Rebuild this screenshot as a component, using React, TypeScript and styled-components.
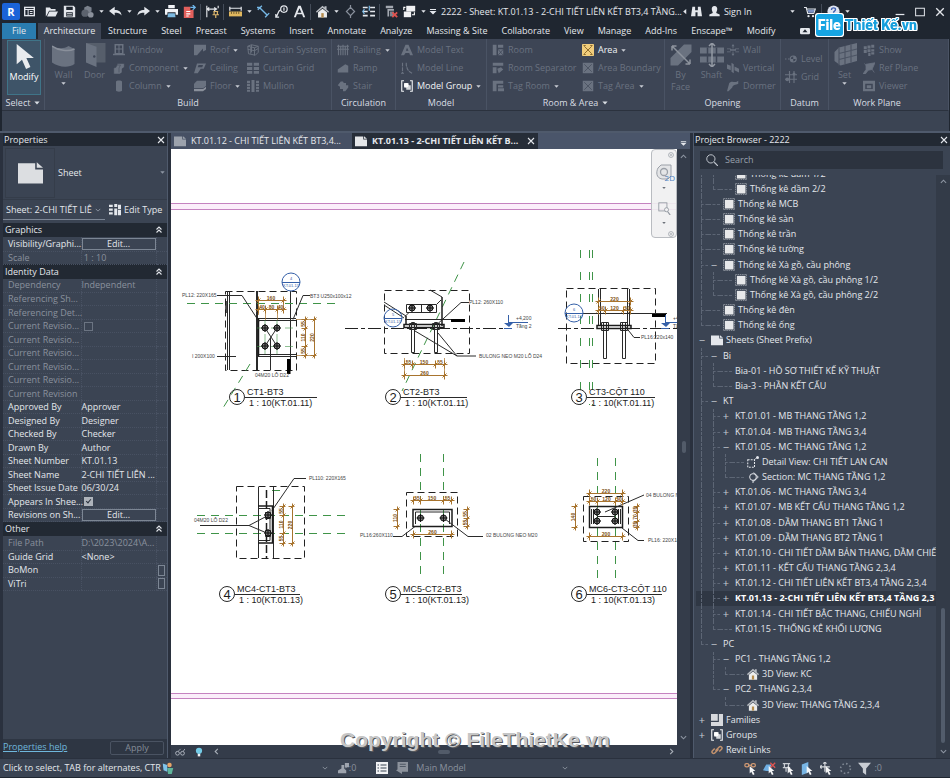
import React from 'react';
import styled, { createGlobalStyle, css } from 'styled-components';

const c = {
  dark: '#1f2630',
  header: '#222933',
  panel: '#3b4453',
  ribbon: '#3d4555',
  track: '#2e3643',
  frame: '#2a313e',
  tabStrip: '#4a556a',
  line: '#4f5a6c',
  text: '#e4e7ec',
  dim: '#6a7280',
  mute: '#8a919d',
};

const Global = createGlobalStyle`
  *, *::before, *::after { box-sizing: border-box; }
  body { margin: 0; background: ${c.dark}; }
  body, button, input, select, table { font-family: "Open Sans", "Noto Sans", sans-serif; font-size: 9px; line-height: 12px; color: ${c.text}; }
  button { background: none; border: 0; padding: 0; margin: 0; }
  svg { display: block; flex: none; }
`;

/* ---------- icons ---------- */

const P = 'currentColor';
const icons: Record<string, React.ReactNode> = {
  sheetWin: <><rect x="1" y="2" width="14" height="12" fill="none" stroke={P} strokeWidth="2" /><path d="M1 5h14M6 5v9M8.500 8h4M8.500 11h4" stroke={P} strokeWidth="1.500" /></>,
  open: <path d="M1 3h5l1.500 2H13v2H5L2.500 12 1 14zM5.500 8H16l-3 6H2.500z" fill={P} />,
  save: <path fillRule="evenodd" d="M1 1h12l2 2v12H1zM4 2v4h8V2zM4 9v5h8V9zM5 10h6v1H5zM5 12h6v1H5z" fill={P} />,
  sync: <><path d="M8 1l5 2v5l-5 2-4-2V3z" fill="#7a818c" /><circle cx="5" cy="10" r="4.500" fill="#5c636e" /><circle cx="12" cy="12" r="3.500" fill="#8b919b" /></>,
  undo: <path d="M7 2v4c5 0 8 2 8.500 7C13 10 11 9.500 7 9.500V13L0 7.500z" fill={P} />,
  redo: <path d="M9 2v4C4 6 1 8 .5 13 3 10 5 9.500 9 9.500V13l7-5.500z" fill={P} />,
  print: <><path d="M4 0h8v4H4zM0 5h16v7h-3V9H3v3H0z" fill="#f2f4f7" /><path d="M4 10h8l1 5H3z" fill="#7cb9e0" /></>,
  pdf: <><path d="M1 2h8v4h4v10H1z" fill="#e2605c" /><path d="M4 8h5M4 11h5M4 13.500h3" stroke="#fff" strokeWidth="1.400" /><path d="M9 3h6m-3-3l3 3-3 3" fill="none" stroke="#6fb6ea" strokeWidth="1.600" /></>,
  pin: <><path d="M1 1v14M15 1v3M1 5h12M4 3L1.500 5 4 7M10 3l3 2-3 2" stroke={P} strokeWidth="1.400" fill="none" /><path d="M9 8h6M10 8v4M14 8v4M8 12h8M12 12v4" stroke="#d9b36a" strokeWidth="1.500" /></>,
  ruler: <><path d="M1 2v5M15 2v5M1 4h14" stroke={P} strokeWidth="1.500" /><rect x="0" y="8" width="16" height="6" fill="#e0b75e" /><path d="M3 8v3M6 8v3M9 8v3M12 8v3" stroke="#5b4a25" /></>,
  dimension: <path d="M3 3l10 10M1 6l5-5M10 15l5-5M0 3h4" stroke="#76b8e6" strokeWidth="1.700" fill="none" />,
  tag: <><circle cx="11" cy="5" r="4" fill="none" stroke={P} strokeWidth="1.500" /><path d="M11 3v4M7 6c-4 1-3 7-6 9M1 11v4h4" stroke={P} strokeWidth="1.500" fill="none" /></>,
  textA: <path fillRule="evenodd" d="M6.500 1h3L15 15h-2.500l-1.300-3.500H4.800L3.500 15H1zM8 4L5.600 9.500h4.800z" fill={P} />,
  house: <><path d="M0 8l8-7 2.500 2.200V1.500H13v4L16 8l-1 1.500L8 3.500 1 9.500z" fill="#b7bbc1" /><path d="M2.500 9L8 4.500 13.500 9v6.500h-11z" fill="#eceded" /><path d="M6.500 10h3v5.500h-3z" fill="#b58c4d" /></>,
  section: <path d="M8 0v3M8 13v3M8 3l5 5-5 5-5-5z" fill="none" stroke="#8a919d" strokeWidth="1.500" />,
  thin: <><path d="M1 3h6M1 8h6M1 13h6M10 3h6M10 8h6M10 13h6" stroke={P} strokeWidth="2" /><path d="M3 5l-2 3 2 3M9 1v6" stroke="#76b8e6" strokeWidth="1.500" fill="none" /></>,
  closeWin: <><path d="M1 1h9v3H1zM3 5h8v2H5v7H3z" fill="#a3a8b0" /><path d="M6 8h5v6H6z" fill="#7d848f" /><path d="M9 9l6 6M15 9l-6 6" stroke="#e0524e" strokeWidth="2.200" /></>,
  switchWin: <><rect x="4" y="1" width="11" height="7" fill="#f1f2f4" /><rect x="1" y="8" width="9" height="7" fill="#f1f2f4" /><path d="M11 12h3V9M3 3H1v3" stroke="#fff" strokeWidth="1.400" fill="none" /></>,
  binoculars: <path d="M2 1h4v5h4V1h4l2 14H9.500V9h-3v6H0z" fill={P} />,
  user: <path d="M8 0c3 0 4 2 4 4.500S10.500 9 10.500 10l5 2.500V15H.5v-2.500l5-2.500C5.500 9 4 7 4 4.500S5 0 8 0z" fill={P} />,
  cart: <><path d="M0 2h3l2 8h8l2-6H4" fill="none" stroke={P} strokeWidth="1.600" /><path d="M5 5h9l-1.500 4H6z" fill="#7d92c4" /><circle cx="6" cy="13.500" r="1.500" fill={P} /><circle cx="12" cy="13.500" r="1.500" fill={P} /></>,
  help: <><circle cx="8" cy="8" r="7.500" fill="#dfe5f2" /><path d="M5.500 6c0-3.500 5-3 5-.5 0 2-2.500 2-2.500 4M8 11.500v1.500" fill="none" stroke="#3e5fb0" strokeWidth="1.700" /></>,
  cursor: <path d="M3 0v13l3.400-3L9 16l2.800-1.300L9.200 9H14z" fill="#e9ebee" />,
  wall: <><path d="M0 2c4 2 8 2 11 0l4 2v10c-4 3-11 2-15-1z" fill={P} /><path d="M0 2c4 3 11 4 15 2" fill="none" stroke="#8a909b" /></>,
  door: <><path d="M2 0h13v13H7z" fill="#565e6b" /><path d="M2 0l7 2.500V16l-7-3z" fill={P} /><circle cx="7.500" cy="9" r=".8" fill="#3d4555" /></>,
  window: <path fillRule="evenodd" d="M2 0h12v13h2v2H0v-2h2zM4 2v4h3.300V2zM8.700 2v4H12V2zM4 7.400V12h3.300V7.400zM8.700 7.400V12H12V7.400z" fill={P} />,
  component: <path d="M6 2h9v5l-3 2v5l-3 2H1V8l3-1zM5 4h5l-2 4v6" fill={P} stroke="#3d4555" strokeWidth=".7" />,
  column: <path d="M4 2c0-2 8-2 8 0v12c0 2-8 2-8 0z" fill={P} />,
  roof: <path d="M0 1h16v7l-4 2V6L4 15H0z" fill={P} />,
  ceiling: <path fillRule="evenodd" d="M4 2h12l-3 7H9l-4 6H0zM6 4L5 7h6l1-3z" fill={P} />,
  floor: <><path d="M4 1h12v7l-4 3H0V5z" fill={P} /><path d="M0 12h12l4-3v3l-4 3H0z" fill="#8a909b" /></>,
  curtainSys: <path d="M1 3l5-2 9 2v8l-4 4-9-2zM1 3l9 2 5-2M10 5v10M1 7l9 2 5-3M5 4v9M6 1v10" fill="none" stroke={P} strokeWidth="1.300" />,
  curtainGrid: <path d="M0 1h7v4H0zM9 1h7v4H9zM0 6.500h7v4H0zM9 6.500h7v4H9zM0 12h7v3.500H0zM9 12h7v3.500H9z" fill={P} />,
  mullion: <path d="M0 1h4v3H0zM0 5h4v3H0zM0 9h4v3H0zM0 13h4v2.500H0zM6 0h4v16H6zM12 1h4v3h-4zM12 5h4v3h-4zM12 9h4v3h-4zM12 13h4v2.500h-4z" fill={P} />,
  railing: <path d="M0 3h16M0 7h16M2 1v14M5 3v12M8 1v14M11 3v12M14 1v14" stroke={P} strokeWidth="1.500" />,
  ramp: <path d="M1 10l10-7 4 2v9H1z" fill={P} />,
  stair: <path d="M1 7l4-5h3l1 2h3v3h3v3l-4 5H8v-3H4V9z" fill={P} />,
  modelText: <path fillRule="evenodd" d="M6 1h4l6 14h-4l-1-3H6l-2 3H0zM8 5L6.500 9H10z" fill={P} />,
  modelLine: <path d="M2 1v14M7 1c0 8 3 12 8 14M7 2v3M0 15h4" fill="none" stroke={P} strokeWidth="1.500" strokeDasharray="5 1" />,
  group: <><path d="M4 1H1v14h3M12 1h3v14h-3" fill="none" stroke="#f0f2f4" strokeWidth="1.500" /><path d="M4 4h6v3h3v6H7v-3H4z" fill="#d5d8dc" /><circle cx="7" cy="7" r="3" fill="#fff" /></>,
  room: <><path d="M1 1h5v14H1zM8 1h7v4H8zM8 7h7v8H8z" fill={P} /><path d="M8 7l7 8M15 7l-7 8" stroke="#3d4555" /></>,
  roomSep: <path d="M1 1h14v4H1zM1 7h5v8H1zM7 9l5-2 3 3-6 5z" fill={P} />,
  roomTag: <path d="M1 1h14v4H6v10H1zM8 7h7v3H8zM8 11h8v4H8z" fill={P} />,
  area: <><rect width="16" height="16" rx="1" fill="#f1cd7c" /><path d="M3 3l10 10M13 3L3 13M2 2h3M11 2h3M2 14h3M11 14h3" stroke="#8c6a2a" strokeWidth="1.300" /></>,
  areaDim: <><rect x="1" y="1" width="14" height="14" fill={P} /><path d="M3 3l10 10M13 3L3 13" stroke="#4c5463" strokeWidth="1.300" /></>,
  byFace: <><path d="M10 1h5v5l-9 9H1v-5z" fill={P} /><path d="M2 2l12 12M2 2v3M2 2h3M14 14v-3M14 14h-3" stroke="#8d939d" fill="none" /></>,
  shaft: <><path d="M0 3h16v4H0zM0 9h16v4H0z" fill={P} /><path d="M8 0v16M6 2l2-2 2 2M6 14l2 2 2-2" stroke="#9399a3" fill="none" /><path d="M5 3v10M11 3v10" stroke="#3d4555" /></>,
  openWall: <path d="M0 6h5v1H0zM0 10h5v1H0zM11 6h5v1h-5zM11 10h5v1h-5zM4 7h8v2H4zM8 0l2 3H6zM7.500 3h1v3h-1zM7.500 10h1v3h-1zM8 16l2-3H6z" fill={P} />,
  vertical: <path d="M0 3l5 2v6l-5-2zM6 1l3 2v12l-3-2zM10 6l6 3v5l-6-3z" fill={P} />,
  dormer: <path d="M3 4c4-4 8 1 12-3v4c-4 2-7 1-8 5l-5 5H0z" fill={P} />,
  level: <><path d="M0 8h2M4 8h2" stroke={P} strokeWidth="1.500" /><circle cx="11" cy="8" r="4" fill="none" stroke={P} strokeWidth="1.500" /><path d="M11 4v4h4a4 4 0 0 0-4-4zM11 12V8H7a4 4 0 0 0 4 4z" fill={P} /></>,
  grid: <><path d="M6 0v16M12 0v16M0 5h16M0 11h16" stroke={P} strokeWidth="1.500" /><circle cx="3" cy="11" r="2.500" fill={P} /><circle cx="12" cy="4" r="2" fill={P} /></>,
  setPlane: <><path d="M1 6l3-3 12-3v12L5 15l-4-3z" fill={P} /><path d="M4 3v12M8 2v12M12 1v12M4 7l12-3M4 11l12-3" stroke="#4c5463" strokeWidth=".8" /></>,
  show: <path d="M1 3h4v4H1zM6 2h4v4H6zM11 1h4v4h-4zM1 8h4v4H1zM6 7h4v4H6zM11 7h4v3h-4zM7 12h3v4H7zM11 11h4v3h-4z" fill={P} />,
  refPlane: <path d="M4 3l12-2-4 9-5 1-4 5H0l4-6zM2 2l4 5M11 8l4 6" fill={P} stroke={P} />,
  viewer: <path fillRule="evenodd" d="M0 1h16v14H0zM3 5v7h10V5zM5 7h6v4H5z" fill={P} />,
  page: <path fillRule="evenodd" d="M0 2h11v4h5v9H0zM12 1.500L16 5h-4z" fill={P} />,
  editType: <path d="M0 1h5v3H0zM0 6h5v3H0zM0 11h5v3H0zM7 0h4v4H7zM12 1h4v6h-4zM7 6h4v9H7zM12 8h4v7h-4z" fill={P} />,
  schedule: <><rect x=".5" y=".5" width="15" height="15" fill="none" stroke="#aeb3bb" strokeDasharray="2 1" /><rect x="2.500" y="2.500" width="11.500" height="11.500" fill="#e7e8ea" /></>,
  detail: <><path d="M1 5h9v10H1z" fill="none" stroke={P} strokeWidth="1.400" strokeDasharray="2.500 1.500" /><path d="M10 5l3-3" stroke={P} /><circle cx="14" cy="2" r="2" fill={P} /></>,
  sectionMark: <><circle cx="8" cy="8" r="4.500" fill="none" stroke={P} strokeWidth="1.300" /><path d="M8 12v4M9 2l6 6-6 6" fill="none" stroke={P} strokeWidth="1.300" /></>,
  families: <path d="M0 0h9v9H0zM10.500 0H16v16H0v-5.500h10.500z" fill="#d8dade" />,
  link: <path d="M6 9l5-5c2-2 5 1 3 3l-3 3M10 7l-5 5c-2 2-5-1-3-3l3-3" fill="none" stroke="#c2926e" strokeWidth="2" />,
  search: <><circle cx="6.500" cy="6.500" r="5.500" fill="none" stroke="#c3c8d0" strokeWidth="1.300" /><path d="M11 11l5 5" stroke="#c3c8d0" strokeWidth="1.600" /></>,
  glasses: <><circle cx="4" cy="10" r="3" fill="none" stroke={P} strokeWidth="1.600" /><circle cx="12" cy="10" r="3" fill="none" stroke={P} strokeWidth="1.600" /><path d="M5 7l4-4M13 7l3-4" stroke={P} strokeWidth="1.400" /></>,
  bulb: <><circle cx="8" cy="6" r="5" fill="#74cbe6" /><path d="M6 11h4v4H6z" fill="#eef1f4" /></>,
  workset: <><path d="M1 2l6 2v9l-5-2z" fill="#7fc3ea" /><circle cx="10" cy="4" r="3" fill="#e8a567" /><path d="M7 8h8l-2 8H8z" fill="#5fb59b" /></>,
  editable: <path d="M5 3h4v5l3 3v4H0v-4l5-3zM10 0h6v6h-3l-2 2V6h-1z" fill="#9ea4ae" />,
  mainDoc: <><path d="M0 0h16v16H0z" fill="#f1f2f4" /><path d="M2 4h2M6 4h8M2 8h2M6 8h8M2 12h2M6 12h8" stroke="#3b4453" strokeWidth="1.500" /></>,
  docDim: <><path d="M2 0h14v13H8v3l-8-5 8-4v3H2z" fill="#8c929c" /><path d="M5 3h8M5 6h8" stroke="#3b4453" /></>,
  selLink: <><rect x="1" y="2" width="5" height="4" rx="2" fill="none" stroke="#d39b74" strokeWidth="1.500" /><rect x="9" y="2" width="5" height="4" rx="2" fill="none" stroke="#d39b74" strokeWidth="1.500" /><path d="M5 4h5" stroke="#d39b74" strokeWidth="1.500" /><path d="M7 5v9l2-2 2 4 2-1-2-4h3z" fill="#f4f5f6" /></>,
  selUnder: <><path d="M0 10l4-7h6v8H4z" fill="#6eaee2" /><path d="M9 1l6 6M15 1L9 7" stroke="#df5450" strokeWidth="1.600" /><path d="M7 5v9l2-2 2 4 2-1-2-4h3z" fill="#f4f5f6" /></>,
  selPin: <><path d="M1 2h9M3 2v5M8 2v5M1 7h9M5 7v5" stroke="#c9cdd3" strokeWidth="1.500" /><path d="M7 5v9l2-2 2 4 2-1-2-4h3z" fill="#f4f5f6" /></>,
  selFace: <><path d="M1 3l8-3v13l-8 3z" fill="#78b5e4" /><path d="M7 5v9l2-2 2 4 2-1-2-4h3z" fill="#f4f5f6" /></>,
  selDrag: <><path d="M6 0v12M0 6h12M4 2l2-2 2 2M2 4L0 6l2 2" fill="none" stroke="#d4d7dc" strokeWidth="1.400" /><path d="M7 5v9l2-2 2 4 2-1-2-4h3z" fill="#f4f5f6" /></>,
  busy: <circle cx="8" cy="8" r="6" fill="none" stroke="#7d8591" strokeWidth="2" strokeDasharray="2 2.700" />,
  filter: <path d="M0 1h16L10 8v8L6 13V8z" fill="#c9cdd3" />,
  close: <path d="M2 2l12 12M14 2L2 14" stroke={P} strokeWidth="2.200" fill="none" />,
  max: <rect x="1" y="2" width="14" height="12" fill="none" stroke={P} strokeWidth="1.600" />,
  min: <path d="M1 12h14" stroke={P} strokeWidth="2" />,
  up: <path d="M2 11l6-6 6 6" fill="none" stroke={P} strokeWidth="2.500" />,
  down: <path d="M2 5l6 6 6-6" fill="none" stroke={P} strokeWidth="2.500" />,
  left: <path d="M11 2L5 8l6 6" fill="none" stroke={P} strokeWidth="2.500" />,
  right: <path d="M5 2l6 6-6 6" fill="none" stroke={P} strokeWidth="2.500" />,
  collapse: <path d="M3 7l5-5 5 5M3 13l5-5 5 5" fill="none" stroke={P} strokeWidth="2.200" />,
  caret: <path d="M1 4h14l-7 8z" fill={P} />,
  caretLeft: <path d="M12 2v12L5 8z" fill={P} />,
  menu: <path d="M2 2h12v2H2zM1 6h14l-7 7z" fill={P} />,
  camera: <><rect y="3" width="16" height="10" rx="2" fill={P} /><path d="M8 5l4 5H4z" fill="#1f2630" /></>,
  wheel: <><path d="M2 4l3-3h10v11l-3 3H6C0 14 0 8 2 4z" fill="#e4e5e7" stroke="#9ba0a8" /><circle cx="8" cy="8" r="3.500" fill="none" stroke="#9ba0a8" strokeWidth="1.300" /></>,
  zoomBox: <><rect x="1" y="1" width="10" height="10" fill="none" stroke="#8f959e" /><circle cx="10.500" cy="9.500" r="2.500" fill="#f2f2f3" stroke="#8f959e" /><path d="M12 12l3 4" stroke="#8f959e" strokeWidth="1.500" /></>,
  dot: <><circle cx="8" cy="8" r="6.500" fill="none" stroke="#9a9fa7" strokeWidth="2" /><path d="M5 5l6 6M11 5l-6 6" stroke="#9a9fa7" strokeWidth="1.500" /></>,
};

const Icon = ({ name, size = 12 }: { name: string; size?: number }) => (
  <svg width={size} height={size} viewBox="0 0 16 16" aria-hidden="true">{icons[name]}</svg>
);

/* ---------- frame ---------- */

const Shell = styled.div`
  position: relative;
  display: flex;
  flex-direction: column;
  height: 100vh;
  min-height: 600px;
  overflow: hidden;
  background: ${c.dark};
  white-space: nowrap;
`;

const TitleBar = styled.header`
  display: flex;
  align-items: center;
  height: 23px;
  padding-left: 2px;
`;

const Slot = styled.button<{ $w?: number }>`
  display: flex;
  align-items: center;
  justify-content: center;
  flex: none;
  width: ${(p) => p.$w ?? 18}px;
  height: 20px;
  color: #e4e7ec;
`;

const Logo = styled.button`
  width: 18px;
  height: 17px;
  border-radius: 2px;
  background: #1b63d8;
  color: #fff;
  font-weight: 700;
  font-size: 11px;
  line-height: 16px;
`;

const Rule = styled.span`
  width: 1px;
  height: 16px;
  margin: 0 2px;
  background: #444c59;
`;

const DocTitle = styled.span`
  margin-left: 3px;
`;

const Spacer = styled.span<{ $w?: number }>`
  flex: ${(p) => (p.$w ? `0 0 ${p.$w}px` : '1')};
`;

const MenuBar = styled.nav`
  display: flex;
  height: 16px;
  padding-left: 2px;
`;

const MenuTab = styled.button<{ $kind?: 'file' | 'on' }>`
  display: flex;
  align-items: center;
  padding: 0 7px;
  ${(p) => p.$kind === 'file' && css`width: 34px; justify-content: center; margin-right: 2px; padding: 0; background: #2a7cb0;`}
  ${(p) => p.$kind === 'on' && css`width: 63px; justify-content: center; padding: 0; background: ${c.ribbon};`}
`;

const Brand = styled.div`
  position: absolute;
  top: 14px;
  right: 33px;
  display: flex;
  align-items: center;
  filter: drop-shadow(1px 0 0 #fff) drop-shadow(-1px 0 0 #fff) drop-shadow(0 1px 0 #fff) drop-shadow(0 -1px 0 #fff);
  font-family: Roboto, sans-serif;
  font-weight: 900;
  font-size: 14px;
  line-height: 22px;
  color: #159fdc;
`;

const BrandBox = styled.span`
  padding: 0 2px;
  margin-right: 2px;
  border-radius: 3px;
  background: #16a5e3;
  color: #fff;
`;

/* ---------- ribbon ---------- */

const Ribbon = styled.section`
  display: grid;
  grid-template-columns: 43px 287px 64px 91px 178px 116px 48px 96px;
  height: 72px;
  margin: 0 1px 0 2px;
  background: ${c.ribbon};
  border-right: 1px solid #4a5364;
  border-bottom: 1px solid #2b323e;
`;

const Panel = styled.div`
  display: flex;
  flex-direction: column;
  min-width: 0;
  border-right: 1px solid #4a5364;
  &:last-child { border-right: 0; }
`;

const PanelBody = styled.div<{ $pad?: number }>`
  display: flex;
  flex: 1;
  padding-left: ${(p) => p.$pad ?? 5}px;
`;

const PanelTitle = styled.div`
  display: flex;
  align-items: center;
  justify-content: center;
  gap: 4px;
  height: 15px;
  color: #d9dde3;
`;

const Big = styled.button<{ $on?: boolean }>`
  display: flex;
  flex-direction: column;
  align-items: center;
  width: 31px;
  padding-top: 4px;
  color: ${(p) => (p.$on ? '#fff' : c.dim)};
  ${(p) => p.$on && css`width: 34px; height: 55px; margin-top: 1px; padding-top: 3px; background: #3e5468; border: 1px solid #3f7488;`}
  svg { margin-bottom: 2px; }
  svg + svg { color: #c9cdd4; }
`;

const Stack = styled.div<{ $w: number; $center?: boolean }>`
  display: flex;
  flex-direction: column;
  ${(p) => p.$center && css`justify-content: center;`}
  width: ${(p) => p.$w}px;
  padding-top: 2px;
`;

const Cmd = styled.button<{ $on?: boolean }>`
  display: flex;
  align-items: center;
  gap: 4px;
  height: 18px;
  color: ${(p) => (p.$on ? '#f1f3f6' : c.dim)};
  svg:last-child:not(:first-child) { color: #c9cdd4; }
`;

type CmdDef = [icon: string, label: string, caret?: boolean, on?: boolean];
const CmdStack = ({ w, items, center }: { w: number; items: CmdDef[]; center?: boolean }) => (
  <Stack $w={w} $center={center}>
    {items.map(([icon, label, caret, on]) => (
      <Cmd key={label} $on={on}>
        <Icon name={icon} />
        {label}
        {caret && <Icon name="caret" size={5} />}
      </Cmd>
    ))}
  </Stack>
);

const OptionsBar = styled.div`
  height: 20px;
  margin: 0 1px 0 2px;
  background: ${c.panel};
`;

/* ---------- workspace ---------- */

const Work = styled.main`
  display: grid;
  grid-template-columns: 165px minmax(0, 1fr) 257px;
  gap: 3px;
  flex: 1;
  min-height: 0;
  padding-left: 3px;
  border-top: 2px solid ${c.line};
  background: ${c.frame};
`;

const Side = styled.aside`
  display: flex;
  flex-direction: column;
  min-width: 0;
  min-height: 0;
  background: ${c.panel};
  border-right: 1px solid ${c.line};
  overflow: hidden;
`;

const Browser = styled(Side)`
  border-right: 0;
  border-left: 1px solid ${c.line};
`;

const SideHead = styled.div`
  display: flex;
  align-items: center;
  justify-content: space-between;
  flex: none;
  height: 13px;
  padding: 0 1px;
  background: ${c.header};
`;

const TypeBox = styled.button`
  display: flex;
  align-items: center;
  flex: none;
  height: 54px;
  padding: 0 2px;
  border-bottom: 1px solid #343c49;
  text-align: left;
`;

const Thumb = styled.span`
  display: grid;
  place-items: center;
  width: 50px;
  height: 50px;
  margin-right: 3px;
  border: 1px solid #353d4a;
  color: #dcdee1;
`;

const Grow = styled.span`
  flex: 1;
`;

const TypeCaret = styled.span`
  color: #8e96a3;
`;

const FilterRow = styled.div`
  display: flex;
  align-items: center;
  gap: 4px;
  flex: none;
  height: 20px;
  margin-bottom: 3px;
`;

const SelectWrap = styled.label`
  display: flex;
  align-items: center;
  width: 102px;
  height: 20px;
  padding: 0 3px;
  border-bottom: 1px solid #7d8796;
  color: #8e96a3;
`;

const Select = styled.select`
  appearance: none;
  width: 86px;
  height: 16px;
  margin-right: 3px;
  padding: 0;
  border: 0;
  background: none;
  outline: none;
  overflow: hidden;
`;

const EditType = styled.button`
  display: flex;
  align-items: center;
  gap: 3px;
`;

const Props = styled.table`
  width: 100%;
  table-layout: fixed;
  border-collapse: collapse;
  td, th { padding: 0; font-weight: 400; text-align: left; }
`;

const GroupHead = styled.th`
  height: 14px;
  background: ${c.header};
  div { display: flex; align-items: center; justify-content: space-between; padding: 0 4px 0 2px; line-height: 14px; }
`;

const PropRow = styled.tr<{ $dim?: boolean; $short?: boolean }>`
  height: ${(p) => (p.$short ? 13 : 14)}px;
  color: ${(p) => (p.$dim ? c.mute : c.text)};
  th, td { border-bottom: 1px dotted #485162; line-height: 12px; }
  th { padding-left: 5px; }
  td { border-left: 1px dotted #485162; }
`;

const EditButton = styled.button`
  display: block;
  width: 74px;
  height: 12px;
  border: 1px solid #7c8694;
  line-height: 10px;
`;

const Check = styled.input`
  appearance: none;
  display: block;
  width: 9px;
  height: 9px;
  margin: 0 2px;
  border: 1px solid #6b7482;
  &:checked { background: #aeb3bb; border-color: #aeb3bb; }
  &:checked::after { content: ''; display: block; width: 3px; height: 5px; margin: 0 2px; border: solid #2b323e; border-width: 0 1px 1px 0; transform: rotate(40deg); }
`;

const MiniButton = styled.button`
  display: block;
  width: 7px;
  height: 11px;
  margin-left: 1px;
  border: 1px solid #7c8694;
`;

const SideFoot = styled.div`
  display: flex;
  align-items: flex-start;
  justify-content: space-between;
  flex: none;
  height: 19px;
  margin-top: auto;
  padding: 2px 3px 0 0;
  background: ${c.track};
  a { color: #6fb7dc; }
`;

const Apply = styled.button`
  width: 54px;
  height: 14px;
  border: 1px solid #4a5362;
  border-radius: 2px;
  color: #858c98;
`;

/* ---------- document area ---------- */

const Center = styled.section`
  display: flex;
  flex-direction: column;
  min-width: 0;
  min-height: 0;
`;

const DocTabs = styled.div`
  display: flex;
  flex: none;
  height: 16px;
  background: ${c.tabStrip};
`;

const DocTab = styled.button<{ $on?: boolean }>`
  display: flex;
  align-items: center;
  gap: 5px;
  width: ${(p) => (p.$on ? 186 : 181)}px;
  padding: 0 3px;
  background: ${(p) => (p.$on ? '#262d38' : '#465064')};
  font-weight: ${(p) => (p.$on ? 700 : 400)};
  svg:first-child { color: ${(p) => (p.$on ? '#e4e6e9' : '#9ca2ac')}; }
  svg:last-child:not(:first-child) { margin-left: auto; }
`;

const View = styled.div`
  display: grid;
  grid-template-columns: minmax(0, 1fr) 13px;
  grid-template-rows: minmax(0, 1fr) 13px;
  flex: 1;
  min-height: 0;
`;

const Paper = styled.div`
  position: relative;
  overflow: hidden;
  background: #fff;
`;

const NavBar = styled.div`
  position: absolute;
  top: 0;
  right: 0;
  display: flex;
  flex-direction: column;
  align-items: center;
  gap: 6px;
  width: 26px;
  height: 89px;
  padding: 2px;
  border: 1px solid #b9bcc1;
  border-radius: 4px;
  background: rgba(240, 240, 241, 0.9);
  color: #6c7179;
  svg:first-child, svg:last-child { align-self: flex-end; }
`;

const Wheel = styled.button`
  position: relative;
  color: #4c7fbe;
  font-size: 8px;
  line-height: 8px;
  span { position: absolute; right: -3px; bottom: -2px; }
`;

const NavRule = styled.span`
  width: 20px;
  height: 1px;
  background: #c2c4c8;
`;

const VScroll = styled.div`
  display: flex;
  flex-direction: column;
  align-items: center;
  justify-content: space-between;
  padding: 4px 0;
  background: #343c4a;
  color: #8e96a3;
`;

const Grip = styled.span<{ $flat?: boolean }>`
  width: ${(p) => (p.$flat ? 12 : 4)}px;
  height: ${(p) => (p.$flat ? 4 : 12)}px;
  border-radius: 2px;
  background: #525b69;
`;

const HScroll = styled.div`
  display: flex;
  align-items: center;
  gap: 9px;
  padding: 0 2px 0 4px;
  background: #343c4a;
  color: #aab0ba;
`;

const Corner = styled.div`
  background: #343c4a;
`;

/* ---------- browser tree ---------- */

const SearchBox = styled.label`
  display: flex;
  align-items: center;
  gap: 7px;
  flex: none;
  height: 18px;
  margin: 5px 7px 6px 6px;
  padding: 0 6px;
  background: #2c333f;
  input { flex: 1; min-width: 0; border: 0; padding: 0; background: none; outline: none; }
  input::placeholder { color: #98a0ab; opacity: 1; }
`;

const TreeArea = styled.div`
  display: grid;
  grid-template-columns: minmax(0, 1fr) 14px;
  flex: 1;
  min-height: 0;
  overflow: hidden;
`;

const TreeClip = styled.div`
  display: flex;
  flex-direction: column;
  justify-content: flex-end;
  min-height: 0;
  overflow: hidden;
`;

const Tree = styled.ul`
  display: flex;
  flex-direction: column;
  flex: none;
  height: calc(100% + 9px);
  margin: 0;
  padding: 0 0 0 2px;
  list-style: none;
`;

const TreeRow = styled.li<{ $on?: boolean }>`
  display: flex;
  align-items: center;
  flex: 1;
  min-height: 0;
  overflow: hidden;
  ${(p) => p.$on && css`background: #2f3744; font-weight: 700; color: #fff;`}
`;

const Rail = styled.span<{ $k: string }>`
  position: relative;
  flex: none;
  align-self: stretch;
  display: grid;
  place-items: center;
  width: 12px;
  color: #c6cad1;
  font-size: 11px;
  font-weight: 400;
  &::before {
    content: '';
    position: absolute;
    left: 5px;
    top: 0;
    bottom: ${(p) => (p.$k === 'L' ? '50%' : '0')};
    border-left: ${(p) => ('|EL'.includes(p.$k) ? '1px dashed #5d6675' : '0')};
  }
  &::after {
    content: '';
    position: absolute;
    left: ${(p) => (p.$k === '-' ? 0 : 5)}px;
    right: 0;
    top: 50%;
    border-top: ${(p) => ('EL-'.includes(p.$k) ? '1px dashed #5d6675' : '0')};
  }
`;

const Node = styled.span`
  display: flex;
  align-items: center;
  gap: 3px;
  padding-left: 3px;
`;

const TreeScroll = styled.div`
  display: flex;
  flex-direction: column;
  align-items: center;
  padding: 3px 0;
  background: #333b48;
  color: #8e96a3;
`;

const TreeThumb = styled.span`
  width: 4px;
  height: 135px;
  margin: auto 0 5px;
  border-radius: 2px;
  background: #525c6b;
`;

type NodeDef = [rails: string, icon: string, label: string, on?: boolean];
const nodes: NodeDef[] = [
  ['|E-', 'schedule', 'Thống kê dầm 1/2'],
  ['|L-', 'schedule', 'Thống kê dầm 2/2'],
  ['E-', 'schedule', 'Thống kê MCB'],
  ['E-', 'schedule', 'Thống kê sàn'],
  ['E-', 'schedule', 'Thống kê trần'],
  ['E-', 'schedule', 'Thống kê tường'],
  ['Em', 'schedule', 'Thống kê Xà gồ, cầu phông'],
  ['|E-', 'schedule', 'Thống kê Xà gồ, cầu phông 1/2'],
  ['|L-', 'schedule', 'Thống kê Xà gồ, cầu phông 2/2'],
  ['E-', 'schedule', 'Thống kê đèn'],
  ['L-', 'schedule', 'Thống kê ống'],
  ['m', 'page', 'Sheets (Sheet Prefix)'],
  ['Em', '', 'Bi'],
  ['|E-', '', 'Bia-01 - HỒ SƠ THIẾT KẾ KỸ THUẬT'],
  ['|L-', '', 'Bia-3 - PHẦN KẾT CẤU'],
  ['Em', '', 'KT'],
  ['|Ep', '', 'KT.01.01 - MB THANG TẦNG 1,2'],
  ['|Ep', '', 'KT.01.04 - MB THANG TẦNG 3,4'],
  ['|Em', '', 'KT.01.05 - MC THANG TẦNG 1,2'],
  ['||E-', 'detail', 'Detail View: CHI TIẾT LAN CAN'],
  ['||L-', 'sectionMark', 'Section: MC THANG TẦNG 1,2'],
  ['|Ep', '', 'KT.01.06 - MC THANG TẦNG 3,4'],
  ['|Ep', '', 'KT.01.07 - MB KẾT CẤU THANG TẦNG 1,2'],
  ['|Ep', '', 'KT.01.08 - DẦM THANG BT1 TẦNG 1'],
  ['|Ep', '', 'KT.01.09 - DẦM THANG BT2 TẦNG 1'],
  ['|Ep', '', 'KT.01.10 - CHI TIẾT DẦM BẢN THANG, DẦM CHIẾU'],
  ['|Ep', '', 'KT.01.11 - KẾT CẤU THANG TẦNG 2,3,4'],
  ['|Ep', '', 'KT.01.12 - CHI TIẾT LIÊN KẾT BT3,4 TẦNG 2,3,4'],
  ['|Ep', '', 'KT.01.13 - 2-CHI TIẾT LIÊN KẾT BT3,4 TẦNG 2,3', true],
  ['|Ep', '', 'KT.01.14 - CHI TIẾT BẬC THANG, CHIẾU NGHỈ'],
  ['|L-', '', 'KT.01.15 - THỐNG KÊ KHỐI LƯỢNG'],
  ['Lm', '', 'PC'],
  [' Em', '', 'PC1 - THANG TẦNG 1,2'],
  [' |L-', 'house', '3D View: KC'],
  [' Lm', '', 'PC2 - THANG 2,3,4'],
  ['  L-', 'house', '3D View: THANG TẦNG 2,3,4'],
  ['p', 'families', 'Families'],
  ['p', 'group', 'Groups'],
  [' ', 'link', 'Revit Links'],
];

/* ---------- status bar ---------- */

const Status = styled.footer`
  display: flex;
  align-items: center;
  flex: none;
  height: 20px;
  padding: 0 68px 0 3px;
  border-top: 1px solid #2a313e;
  border-bottom: 1px solid ${c.dark};
  background: ${c.panel};
  color: ${c.mute};
`;

const StatusText = styled.span`
  margin-right: 1px;
  color: ${c.text};
`;

const Watermark = styled.div`
  position: absolute;
  left: 50%;
  bottom: 26px;
  transform: translateX(-50%);
  font: 700 21px/24px "Liberation Sans", sans-serif;
  color: #c6c6c6;
  text-shadow: 1px 1px 0 #55585d;
  pointer-events: none;
`;

/* ---------- sheet drawing ---------- */

const Sheet = styled.svg`
  width: 100%;
  height: 100%;
  font-family: "Liberation Sans", sans-serif;
  .k { stroke: #2a2a2a; fill: none; }
  .kk { stroke: #1c1c1c; fill: none; stroke-width: 1.5; }
  .dash { stroke: #222; fill: none; stroke-dasharray: 7 4; }
  .g { stroke: #3f9448; fill: none; stroke-dasharray: 8 6; }
  .gs { stroke: #3f9448; fill: none; stroke-dasharray: 8 14; }
  .o { stroke: #a8742e; fill: none; }
  .n { font-size: 5px; fill: #444; }
  .d { font-size: 5px; font-weight: 700; fill: #7d4f10; text-anchor: middle; }
  .t { font-size: 9px; fill: #1c1c1c; }
  .b { stroke: #3560a8; fill: none; }
  .bt { font-size: 4px; fill: #3560a8; text-anchor: middle; }
`;

const Dim = ({ at, pts, labels, v }: { at: number; pts: number[]; labels: string[]; v?: boolean }) => {
  const a = pts[0] - 3, z = pts[pts.length - 1] + 3;
  return (
    <g>
      <path className="o" d={v ? `M${at} ${a}V${z}` : `M${a} ${at}H${z}`} />
      {pts.map((p) => (
        <path key={p} className="o" d={v ? `M${at - 4} ${p}h6M${at - 2} ${p + 2}l4-4` : `M${p} ${at - 4}v8M${p - 2} ${at + 2}l4-4`} />
      ))}
      {labels.map((l, i) => {
        const m = (pts[i] + pts[i + 1]) / 2;
        return v
          ? <text key={i} className="d" transform={`translate(${at - 1} ${m}) rotate(-90)`}>{l}</text>
          : <text key={i} className="d" x={m} y={at - 1}>{l}</text>;
      })}
    </g>
  );
};

const Bolt = ({ x, y }: { x: number; y: number }) => (
  <g>
    <circle cx={x} cy={y} r="3" fill="#777" stroke="#111" />
    <path d={`M${x - 4} ${y}h8M${x} ${y - 4}v8`} stroke="#111" />
  </g>
);

const Title = ({ x, y, n, name, scale, w }: { x: number; y: number; n: string; name: string; scale: string; w: number }) => (
  <g>
    <circle className="k" cx={x} cy={y} r="7.500" />
    <text x={x} y={y + 5} fontSize="13" textAnchor="middle" fill="#1c1c1c">{n}</text>
    <path className="k" d={`M${x + 8} ${y + 0.5}h${w}`} />
    <text className="t" x={x + 10} y={y - 2}>{name}</text>
    <text className="t" x={x + 12} y={y + 9}>{scale}</text>
  </g>
);

const Marker = ({ x, y, n }: { x: number; y: number; n: string }) => (
  <g>
    <circle className="b" cx={x} cy={y} r="9" />
    <path className="b" d={`M${x - 9} ${y + 0.5}h18`} />
    <text className="bt" x={x} y={y - 2}>{n}</text>
    <text className="bt" x={x} y={y + 5}>KT.01.13</text>
  </g>
);

const LevelMark = ({ x }: { x: number }) => (
  <g>
    <path className="b" d={`M${x + 0.5} 315v10M${x} 322.500h20`} />
    <path d={`M${x - 4} 323h9l-4 4z`} fill="#3560a8" />
    <path className="b" d={`M${x - 4} 328.500h8`} />
    <text className="n" x={x + 8} y="320">+4,200</text>
    <text className="n" x={x + 8} y="328">Tầng 2</text>
  </g>
);

const Drawing = () => (
  <Sheet>
    <g transform="translate(-171 -149)">
      <path d="M171 204h2000v5H171zM171 694h2000v5H171z" fill="#fbeefa" />
      {[203.5, 209.5, 693.5, 698.5].map((y) => <path key={y} d={`M171 ${y}h2000`} stroke="#c583c0" />)}

      {/* CT1-BT3 */}
      <path className="dash" d="M225.500 291.500H296.500V370.500H225.500z" />
      <path className="k" d="M227.500 291v79M229.500 291v79M256.500 291v79M257.500 291v79M290.500 291v79M257 318.500h39M257 320.500h39M257 354.500h39M257 356.500h39" />
      <path className="kk" d="M258.500 318v38M226 301v12" />
      <path className="g" d="M187 303.500h148M250 364l-27 44" />
      <path className="g" d="M257 328h38M257 346.500h38M265 320v34M277 320v34" strokeWidth=".6" />
      <Bolt x={265} y={328} /><Bolt x={277} y={328} /><Bolt x={265} y={346} /><Bolt x={277} y={346} />
      <path className="k" d="M265 328l12 18M277 328l-12 18M270.500 338v32M217 295.500h25l17 26M310 295.500h-7l-10 24M217 356.500h19" />
      <rect x="287" y="359" width="3.500" height="15" />
      <text className="n" x="182" y="297">PL12: 220X165</text>
      <text className="n" x="310" y="298">BT3 U250x100x12</text>
      <text className="n" x="192" y="358">I 200X100</text>
      <text className="n" x="255" y="377">04M20 LỖ D22</text>
      <path className="o" d="M258.500 300v15M265.500 308v12M277.500 308v12M283.500 300v12M296 319.500h20M296 355.500h20" strokeWidth=".7" />
      <Dim at={300.5} pts={[258.5, 283.5]} labels={['160']} />
      <Dim at={309.5} pts={[258.5, 265.5, 277.5, 283.5]} labels={['40', '80', '40']} />
      <Dim v at={305.5} pts={[319.5, 328.5, 346.5, 355.5]} labels={['55', '110', '55']} />
      <Dim v at={314.5} pts={[319.5, 355.5]} labels={['220']} />
      <Marker x={291} y={282} n="4" />
      <Title x={237} y={397} n="1" name="CT1-BT3" scale="1 : 10(KT.01.11)" w={72} />

      {/* CT2-BT3 */}
      <path className="dash" d="M384.500 290.500H469.500V353.500H384.500z" />
      <path d="M345 328.500H510" stroke="#222" strokeDasharray="13 3 4 3" fill="none" />
      <path className="g" d="M464 262L402 391" />
      <path className="k" d="M384 302l22 14M384 305l20 13M430 290l12 7M406.500 304.500h30v8h-30zM421.500 304v8M405 319.500h60M405 316.500l4-4M437 304l4-4" />
      <path className="kk" d="M406 316v9M442 297v29M404 324.500h40v3h-40z" />
      <Bolt x={412} y={308} /><Bolt x={430} y={308} />
      <path className="k" d="M411.500 322.500h3v30h-3zM434.500 322.500h3v30h-3zM409.500 323.500h7v6h-7zM432.500 323.500h7v6h-7zM469 302.500h-8l-23 21M415 331l42 25h19M438 333l19 23" />
      <rect x="451" y="319" width="14" height="3" />
      <text className="n" x="469" y="304">PL12: 260X110</text>
      <text className="n" x="479" y="358">BULONG NEO M20 LỖ D24</text>
      <path className="o" d="M404.500 358v20M444.500 358v20" strokeWidth=".7" />
      <Dim at={364.5} pts={[404.5, 412.5, 435.5, 444.5]} labels={['55', '150', '55']} />
      <Dim at={375.5} pts={[404.5, 444.5]} labels={['260']} />
      <Marker x={393} y={318} n="5" />
      <LevelMark x={508} />
      <Title x={393} y={397} n="2" name="CT2-BT3" scale="1 : 10(KT.01.11)" w={66} />

      {/* CT3-CỘT 110 */}
      <path className="dash" d="M566.500 288.500H655.500V363.500H566.500z" />
      <path className="gs" d="M580.500 250v155M589.500 250v155M592.500 250v155" />
      <path d="M558 328.500H680" stroke="#222" strokeDasharray="13 3 4 3" fill="none" />
      <path className="k" d="M598.500 289v36M600.500 289v36M627.500 289v36M629.500 289v36M565 313.500h102M603.500 322.500h3v36h-3zM622.500 322.500h3v36h-3zM601.500 322.500h7v8h-7zM620.500 322.500h7v8h-7zM625 326l9 11.500h6" />
      <path className="kk" d="M597 325.500h34v3h-34z" />
      <rect x="652" y="314" width="14" height="3" />
      <Dim at={301.5} pts={[598.5, 630.5]} labels={['220']} />
      <Dim at={310.5} pts={[598.5, 605.5, 623.5, 630.5]} labels={['50', '120', '50']} />
      <text className="n" x="641" y="339">PL16:220x140</text>
      <Marker x={574} y={313} n="6" />
      <LevelMark x={665} />
      <Title x={579} y={397} n="3" name="CT3-CỘT 110" scale="1 : 10(KT.01.11)" w={68} />

      {/* MC4-CT1-BT3 */}
      <path className="dash" d="M236.500 486.500H304.500V558.500H236.500z" />
      <path className="g" d="M197 515.500h150M197 533.500h150M272 490.500h14" />
      <path className="k" d="M258.500 487v71M273.500 487v71M258 508.500h12v32h-12M200 525.500h49l19-10M249 525.500l19 8M306 478.500h-12l-22 32M265.500 512.500h5v6h-5zM265.500 530.500h5v6h-5z" />
      <path className="kk" d="M258 506h14.500v37H258" />
      <path className="kk" d="M266.500 490v68" strokeDasharray="8 3" />
      <Bolt x={268} y={515} /><Bolt x={268} y={533} />
      <Dim v at={283.5} pts={[506.5, 515.5, 533.5, 543.5]} labels={['55', '110', '55']} />
      <Dim v at={292.5} pts={[506.5, 543.5]} labels={['220']} />
      <text className="n" x="194" y="522">04M20 LỖ D22</text>
      <text className="n" x="309" y="480">PL110: 220X165</text>
      <Title x={227} y={594} n="4" name="MC4-CT1-BT3" scale="1 : 10(KT.01.13)" w={65} />

      {/* MC5-CT2-BT3 */}
      <path className="dash" d="M406.500 492.500H457.500V536.500H406.500z" />
      <path className="g" d="M420.500 454v124M443.500 454v124" />
      <path className="kk" d="M413 509.500h39v17h-39z" />
      <path className="k" d="M415.500 524v-12h34v12M393 536.500h9l13-10M445 519l23 17.500h15" />
      <Bolt x={420.5} y={518} /><Bolt x={443.5} y={518} />
      <Dim at={500.5} pts={[413.5, 420.5, 443.5, 451.5]} labels={['55', '150', '55']} />
      <Dim at={534.5} pts={[413.5, 451.5]} labels={['260']} />
      <Dim v at={397.5} pts={[509.5, 526.5]} labels={['110']} />
      <Dim v at={467.5} pts={[509.5, 518.5, 526.5]} labels={['55', '55']} />
      <text className="n" x="360" y="537">PL16:260X110</text>
      <text className="n" x="486" y="537">02 BULONG NEO M20</text>
      <Title x={393} y={594} n="5" name="MC5-CT2-BT3" scale="1 : 10(KT.01.13)" w={61} />

      {/* MC6-CT3-CỘT 110 */}
      <path className="dash" d="M583.500 496.500H628.500V541.500H583.500z" />
      <path className="g" d="M597.500 458v122M615.500 458v122" />
      <path className="kk" d="M589.500 506.500h33v21h-33z" />
      <path className="k" d="M591.500 509v15M593.500 509v15M618.500 509v15M620.500 509v15M597 516.500h18M605 512l39-17M622 528l16 12.500h6" />
      <Bolt x={597} y={512} /><Bolt x={615} y={512} /><Bolt x={597} y={521} /><Bolt x={615} y={521} />
      <Dim at={493.5} pts={[589.5, 622.5]} labels={['220']} />
      <Dim at={501.5} pts={[589.5, 597.5, 615.5, 622.5]} labels={['50', '120', '50']} />
      <Dim at={536.5} pts={[589.5, 622.5]} labels={['200']} />
      <Dim v at={575.5} pts={[506.5, 527.5]} labels={['140']} />
      <Dim v at={637.5} pts={[506.5, 512.5, 521.5, 527.5]} labels={['35', '70', '35']} />
      <text className="n" x="646" y="497">04 BULONG NEO</text>
      <text className="n" x="648" y="542">PL16: 220X140</text>
      <Title x={579} y={594} n="6" name="MC6-CT3-CỘT 110" scale="1 : 10(KT.01.13)" w={75} />
    </g>
  </Sheet>
);

/* ---------- data ---------- */

const quick: (string | [string])[] = ['open', 'save', 'sync', ['c'], 'undo', ['c'], 'redo', ['c'], 'print', 'pdf', ['|'], 'pin', ['|'], 'ruler', ['c'], 'dimension', 'tag', 'textA', ['|'], 'house', ['c'], 'section', 'thin', ['|'], 'closeWin', 'switchWin', ['c'], ['m']];

const menus = ['Structure', 'Steel', 'Precast', 'Systems', 'Insert', 'Annotate', 'Analyze', 'Massing & Site', 'Collaborate', 'View', 'Manage', 'Add-Ins', 'Enscape™', 'Modify'];

type PropDef = { label: string; value?: string; dim?: boolean; kind?: 'edit' | 'check' | 'mini'; on?: boolean };
const groups: { name: string; rows: PropDef[] }[] = [
  { name: 'Graphics', rows: [{ label: 'Visibility/Graphi...', kind: 'edit' }, { label: 'Scale', value: '\u00a01 : 10', dim: true }] },
  {
    name: 'Identity Data',
    rows: [
      { label: 'Dependency', value: 'Independent', dim: true },
      { label: 'Referencing Sh...', dim: true },
      { label: 'Referencing Det...', dim: true },
      { label: 'Current Revisio...', dim: true, kind: 'check' },
      { label: 'Current Revisio...', dim: true },
      { label: 'Current Revisio...', dim: true },
      { label: 'Current Revisio...', dim: true },
      { label: 'Current Revisio...', dim: true },
      { label: 'Current Revision', dim: true },
      { label: 'Approved By', value: 'Approver' },
      { label: 'Designed By', value: 'Designer' },
      { label: 'Checked By', value: 'Checker' },
      { label: 'Drawn By', value: 'Author' },
      { label: 'Sheet Number', value: 'KT.01.13' },
      { label: 'Sheet Name', value: '2-CHI TIẾT LIÊN ...' },
      { label: 'Sheet Issue Date', value: '06/30/24' },
      { label: 'Appears In Shee...', kind: 'check', on: true },
      { label: 'Revisions on Sh...', kind: 'edit' },
    ],
  },
  {
    name: 'Other',
    rows: [
      { label: 'File Path', value: 'D:\\2023\\2024\\A...', dim: true },
      { label: 'Guide Grid', value: '<None>' },
      { label: 'BoMon', kind: 'mini' },
      { label: 'ViTri', kind: 'mini' },
    ],
  },
];

const selectors = ['selLink', 'selUnder', 'selPin', 'selFace', 'selDrag', 'busy', 'filter'];

export default function App() {
  return (
    <Shell>
      <Global />
      <TitleBar>
        <Logo>R</Logo>
        <Slot aria-label="Home"><Icon name="sheetWin" size={11} /></Slot>
        <Spacer $w={4} />
        {quick.map((q, i) => {
          if (typeof q === 'string') return <Slot key={i} aria-label={q}><Icon name={q} size={13} /></Slot>;
          if (q[0] === '|') return <Rule key={i} />;
          return <Slot key={i} $w={10} aria-label="More"><Icon name={q[0] === 'c' ? 'caret' : 'menu'} size={q[0] === 'c' ? 5 : 8} /></Slot>;
        })}
        <DocTitle>2222 - Sheet: KT.01.13 - 2-CHI TIẾT LIÊN KẾT BT3,4 TẦNG...</DocTitle>
        <Slot $w={6} aria-label="Back"><Icon name="caretLeft" size={7} /></Slot>
        <Slot aria-label="Search"><Icon name="binoculars" size={11} /></Slot>
        <Slot aria-label="Account"><Icon name="user" size={11} /></Slot>
        <button>Sign In</button>
        <Spacer />
        <Slot $w={10} aria-label="Account menu"><Icon name="caret" size={5} /></Slot>
        <Spacer $w={4} />
        <Slot aria-label="Store"><Icon name="cart" /></Slot>
        <Rule />
        <Slot aria-label="Help"><Icon name="help" size={13} /></Slot>
        <Slot $w={10} aria-label="Help menu"><Icon name="caret" size={5} /></Slot>
        <Spacer $w={38} />
        <Slot $w={20} aria-label="Minimize"><Icon name="min" size={10} /></Slot>
        <Slot $w={20} aria-label="Maximize"><Icon name="max" size={10} /></Slot>
        <Slot $w={20} aria-label="Close"><Icon name="close" size={10} /></Slot>
      </TitleBar>
      <MenuBar>
        <MenuTab $kind="file">File</MenuTab>
        <MenuTab $kind="on">Architecture</MenuTab>
        {menus.map((m) => <MenuTab key={m}>{m}</MenuTab>)}
        <MenuTab aria-label="Ribbon display"><Spacer $w={10} /><Icon name="camera" size={10} /></MenuTab>
      </MenuBar>

      <Ribbon>
        <Panel>
          <PanelBody><Big $on><Icon name="cursor" size={25} />Modify</Big></PanelBody>
          <PanelTitle>Select<Icon name="caret" size={6} /></PanelTitle>
        </Panel>
        <Panel>
          <PanelBody $pad={3}>
            <Big><Icon name="wall" size={24} />Wall<Icon name="caret" size={5} /></Big>
            <Big><Icon name="door" size={24} />Door</Big>
            <Spacer $w={3} />
            <CmdStack w={81} items={[['window', 'Window'], ['component', 'Component', true], ['column', 'Column', true]]} />
            <CmdStack w={53} items={[['roof', 'Roof', true], ['ceiling', 'Ceiling'], ['floor', 'Floor', true]]} />
            <CmdStack w={80} items={[['curtainSys', 'Curtain System'], ['curtainGrid', 'Curtain Grid'], ['mullion', 'Mullion']]} />
          </PanelBody>
          <PanelTitle>Build</PanelTitle>
        </Panel>
        <Panel>
          <PanelBody><CmdStack w={58} items={[['railing', 'Railing', true], ['ramp', 'Ramp'], ['stair', 'Stair']]} /></PanelBody>
          <PanelTitle>Circulation</PanelTitle>
        </Panel>
        <Panel>
          <PanelBody><CmdStack w={84} items={[['modelText', 'Model Text'], ['modelLine', 'Model Line'], ['group', 'Model Group', true, true]]} /></PanelBody>
          <PanelTitle>Model</PanelTitle>
        </Panel>
        <Panel>
          <PanelBody>
            <CmdStack w={90} items={[['room', 'Room'], ['roomSep', 'Room Separator'], ['roomTag', 'Tag Room', true]]} />
            <CmdStack w={82} items={[['area', 'Area', true, true], ['areaDim', 'Area Boundary'], ['areaDim', 'Tag Area', true]]} />
          </PanelBody>
          <PanelTitle>Room &amp; Area<Icon name="caret" size={6} /></PanelTitle>
        </Panel>
        <Panel>
          <PanelBody $pad={0}>
            <Big><Icon name="byFace" size={24} /><span>By</span><span>Face</span></Big>
            <Big><Icon name="shaft" size={24} />Shaft</Big>
            <CmdStack w={52} items={[['openWall', 'Wall'], ['vertical', 'Vertical'], ['dormer', 'Dormer']]} />
          </PanelBody>
          <PanelTitle>Opening</PanelTitle>
        </Panel>
        <Panel>
          <PanelBody $pad={4}><CmdStack center w={43} items={[['level', 'Level'], ['grid', 'Grid']]} /></PanelBody>
          <PanelTitle>Datum</PanelTitle>
        </Panel>
        <Panel>
          <PanelBody $pad={0}>
            <Big><Icon name="setPlane" size={24} />Set<Icon name="caret" size={5} /></Big>
            <Spacer $w={3} />
            <CmdStack w={60} items={[['show', 'Show'], ['refPlane', 'Ref Plane'], ['viewer', 'Viewer']]} />
          </PanelBody>
          <PanelTitle>Work Plane</PanelTitle>
        </Panel>
      </Ribbon>
      <OptionsBar />

      <Work>
        <Side>
          <SideHead>Properties<Slot $w={10} aria-label="Close"><Icon name="close" size={8} /></Slot></SideHead>
          <TypeBox>
            <Thumb><Icon name="page" size={25} /></Thumb>
            Sheet<Grow />
            <TypeCaret><Icon name="caret" size={5} /></TypeCaret>
          </TypeBox>
          <FilterRow>
            <SelectWrap>
              <Select aria-label="Instance"><option>Sheet: 2-CHI TIẾT LIÊN</option></Select>
              <Icon name="down" size={6} />
            </SelectWrap>
            <EditType><Icon name="editType" />Edit Type</EditType>
          </FilterRow>
          <Props>
            <colgroup><col width="78" /><col /><col width="10" /></colgroup>
            {groups.map((g) => (
              <tbody key={g.name}>
                <tr><GroupHead colSpan={3}><div>{g.name}<Icon name="collapse" size={8} /></div></GroupHead></tr>
                {g.rows.map((r, i) => (
                  <PropRow key={i} $dim={r.dim} $short={i % 2 === 1}>
                    <th scope="row">{r.label}</th>
                    <td>
                      {r.value}
                      {r.kind === 'edit' && <EditButton>Edit...</EditButton>}
                      {r.kind === 'check' && <Check type="checkbox" aria-label={r.label} defaultChecked={r.on} />}
                    </td>
                    <td>{r.kind === 'mini' && <MiniButton aria-label={r.label} />}</td>
                  </PropRow>
                ))}
              </tbody>
            ))}
          </Props>
          <SideFoot><a href="#help">Properties help</a><Apply>Apply</Apply></SideFoot>
        </Side>

        <Center>
          <DocTabs>
            <DocTab><Icon name="page" />KT.01.12 - CHI TIẾT LIÊN KẾT BT3,4...</DocTab>
            <DocTab $on><Icon name="page" />KT.01.13 - 2-CHI TIẾT LIÊN KẾT B...<Icon name="close" size={8} /></DocTab>
            <Spacer />
            <Slot $w={14} aria-label="Tabs"><Icon name="menu" size={7} /></Slot>
          </DocTabs>
          <View>
            <Paper>
              <Drawing />
              <NavBar>
                <Icon name="dot" size={6} />
                <Wheel><Icon name="wheel" size={16} /><span>2D</span></Wheel>
                <Icon name="caret" size={4} />
                <NavRule />
                <Icon name="zoomBox" size={13} />
                <Icon name="caret" size={4} />
                <Icon name="dot" size={6} />
              </NavBar>
            </Paper>
            <VScroll><Icon name="up" size={7} /><Grip /><Icon name="down" size={7} /></VScroll>
            <HScroll>
              <Icon name="glasses" size={10} />
              <Icon name="bulb" size={10} />
              <Icon name="left" size={7} />
              <Spacer /><Grip $flat /><Spacer />
              <Icon name="right" size={7} />
            </HScroll>
            <Corner />
          </View>
        </Center>

        <Browser>
          <SideHead>Project Browser - 2222<Slot $w={10} aria-label="Close"><Icon name="close" size={8} /></Slot></SideHead>
          <SearchBox><Icon name="search" /><input placeholder="Search" aria-label="Search" /></SearchBox>
          <TreeArea>
            <TreeClip>
              <Tree>
                {nodes.map(([rails, icon, label, on]) => (
                  <TreeRow key={label} $on={on}>
                    {rails.split('').map((k, i) => (
                      <Rail key={i} $k={k}>{k === 'm' ? '−' : k === 'p' ? '+' : null}</Rail>
                    ))}
                    <Node>{icon && <Icon name={icon} />}{label}</Node>
                  </TreeRow>
                ))}
              </Tree>
            </TreeClip>
            <TreeScroll><Icon name="up" size={7} /><TreeThumb /><Icon name="down" size={7} /></TreeScroll>
          </TreeArea>
        </Browser>
      </Work>

      <Status>
        <StatusText>Click to select, TAB for alternates, CTR</StatusText>
        <Icon name="workset" />
        <Spacer $w={148} />
        <Icon name="down" size={6} />
        <Spacer $w={10} />
        <Icon name="editable" size={11} />
        :0
        <Spacer $w={20} />
        <Icon name="mainDoc" />
        <Spacer $w={8} />
        <Icon name="docDim" />
        <Spacer $w={8} />
        Main Model
        <Spacer $w={96} />
        <Icon name="down" size={6} />
        <Spacer />
        {selectors.map((s) => <Slot key={s} $w={19} aria-label={s}><Icon name={s} size={13} /></Slot>)}
        :0
      </Status>

      <Brand><BrandBox>File</BrandBox>Thiết Kế.vn</Brand>
      <Watermark>Copyright © FileThietKe.vn</Watermark>
    </Shell>
  );
}
